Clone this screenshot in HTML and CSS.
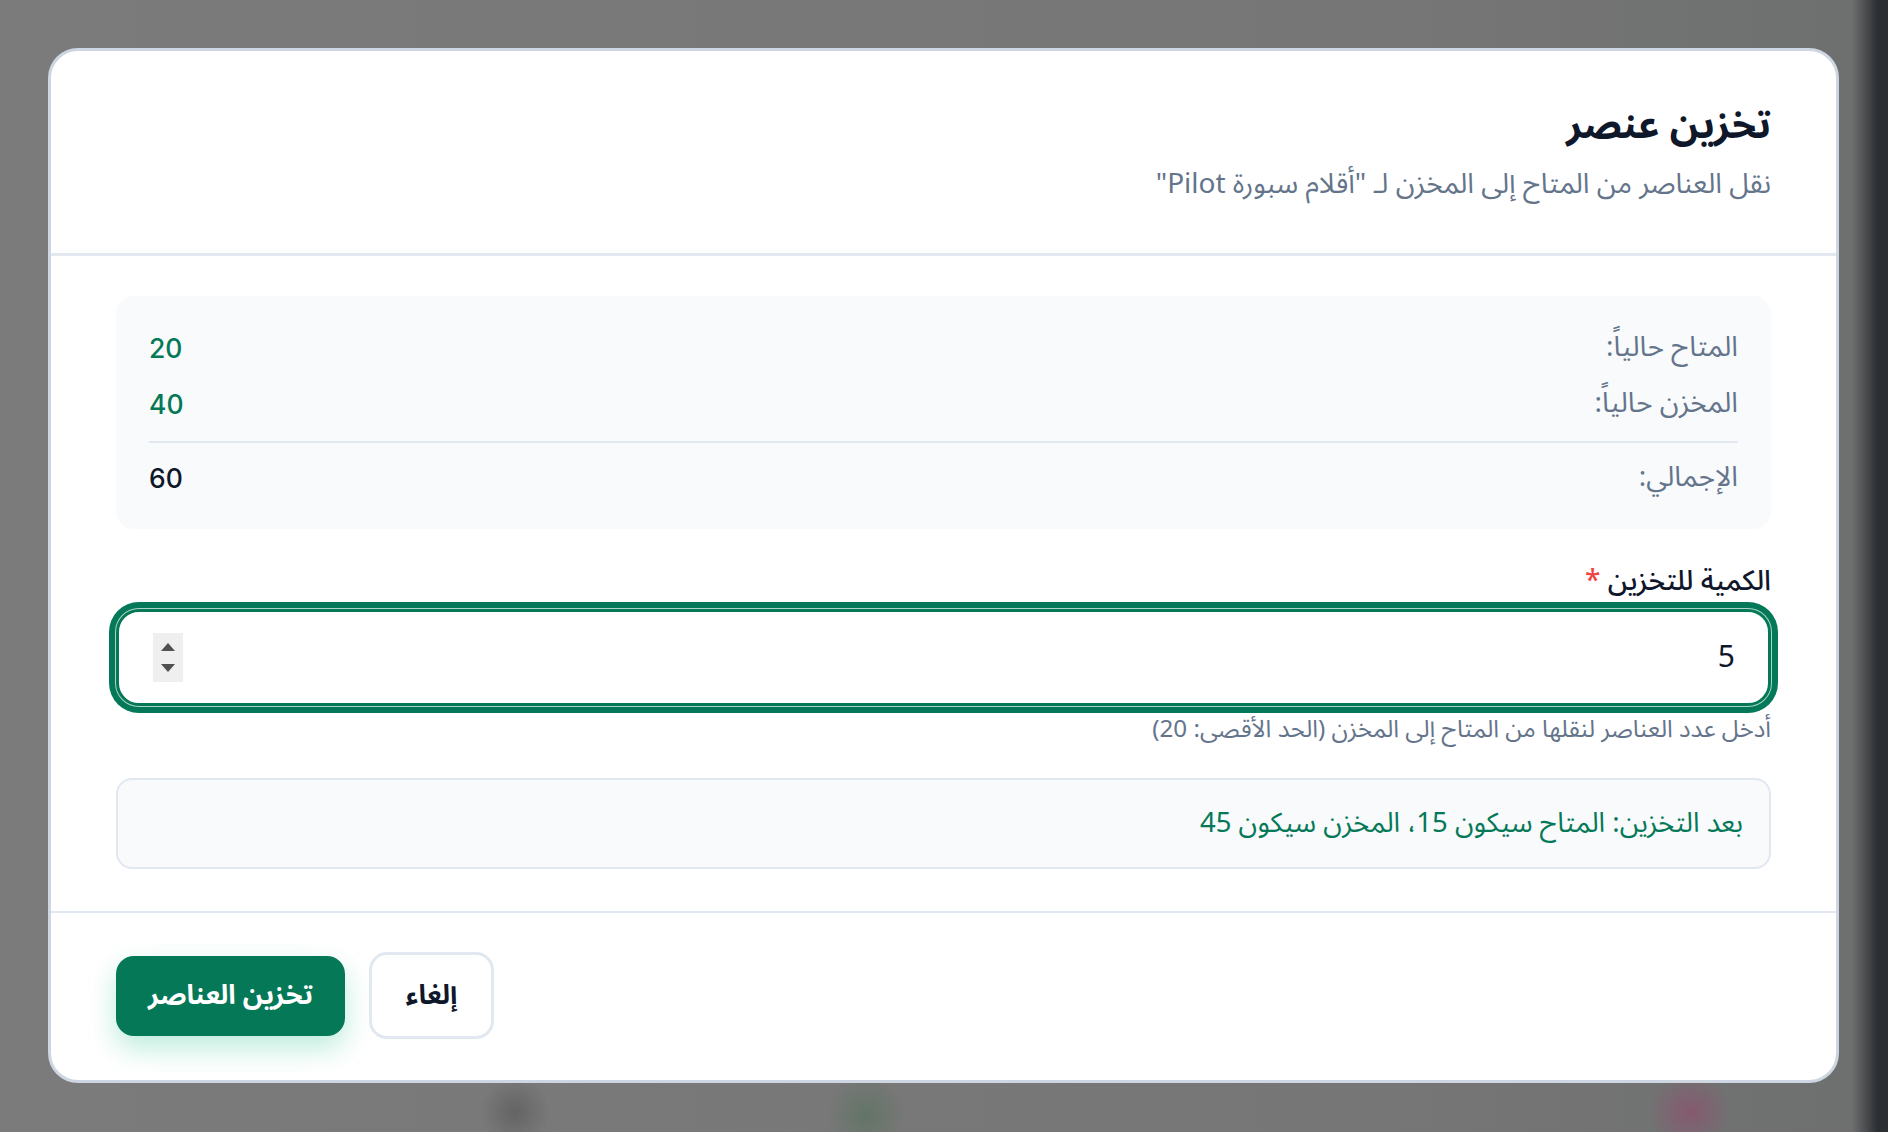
FILE: index.html
```html
<!DOCTYPE html>
<html lang="ar" dir="rtl">
<head>
<meta charset="utf-8">
<title>تخزين عنصر</title>
<link rel="stylesheet" href="styles.css">
</head>
<body>
<div class="overlay">
  <div class="modal">
    <header class="modal-header">
      <h2 class="modal-title">تخزين عنصر</h2>
      <p class="modal-subtitle">نقل العناصر من المتاح إلى المخزن لـ "أقلام سبورة Pilot"</p>
    </header>
    <section class="modal-body">
      <div class="stats">
        <div class="stat-row">
          <span class="stat-label">المتاح حالياً:</span>
          <span class="stat-value green">20</span>
        </div>
        <div class="stat-row">
          <span class="stat-label">المخزن حالياً:</span>
          <span class="stat-value green">40</span>
        </div>
        <div class="stat-row total">
          <span class="stat-label">الإجمالي:</span>
          <span class="stat-value">60</span>
        </div>
      </div>
      <label class="field-label" for="qty">الكمية للتخزين <span class="req">*</span></label>
      <div class="input-wrap">
        <input id="qty" class="qty-input" type="number" value="5" min="1" max="20">
        <span class="spinner"><span class="tri up"></span><span class="tri down"></span></span>
      </div>
      <p class="helper">أدخل عدد العناصر لنقلها من المتاح إلى المخزن (الحد الأقصى: 20)</p>
      <div class="preview">بعد التخزين: المتاح سيكون 15، المخزن سيكون 45</div>
    </section>
    <footer class="modal-footer">
      <button class="btn btn-cancel" type="button">إلغاء</button>
      <button class="btn btn-save" type="button">تخزين العناصر</button>
    </footer>
  </div>
</div>
</body>
</html>
```
FILE: styles.css
```css
* { box-sizing: border-box; }
html, body { margin: 0; padding: 0; }
body {
  width: 1888px;
  height: 1132px;
  overflow: hidden;
  font-family: "Noto Sans Arabic", "Noto Sans", "DejaVu Sans", sans-serif;
  background:
    radial-gradient(circle at 1690px 1112px, rgba(150, 70, 110, 0.55) 0, rgba(150, 70, 110, 0) 40px),
    radial-gradient(circle at 866px 1115px, rgba(60, 110, 70, 0.35) 0, rgba(60, 110, 70, 0) 40px),
    radial-gradient(circle at 515px 1112px, rgba(60, 60, 60, 0.35) 0, rgba(60, 60, 60, 0) 35px),
    linear-gradient(90deg, #7b7b7b 0, #767676 1400px, #6e6f6f 1852px, #2b2e32 1878px, #2b2e32 1888px);
}
.overlay {
  padding: 48px 0 0 48px;
  direction: ltr;
}
.modal {
  direction: rtl;
  width: 1791px;
  background: #ffffff;
  border: 3px solid #cdd6e1;
  border-radius: 30px;
  overflow: hidden;
}
.modal-header {
  padding: 47px 65px 48px;
  border-bottom: 3px solid #e2e8f0;
}
.modal-title {
  margin: 0;
  font-size: 39px;
  line-height: 56px;
  font-weight: 700;
  color: #0f172a;
}
.modal-subtitle {
  margin: 11px 0 0;
  font-size: 28px;
  line-height: 40px;
  color: #64748b;
}
.modal-body {
  padding: 40px 65px 42px;
}
.stats {
  background: #f8fafc;
  border-radius: 18px;
  padding: 34px 33px 33px;
}
.stat-row {
  display: flex;
  justify-content: space-between;
  align-items: center;
  height: 36px;
}
.stat-row + .stat-row { margin-top: 20px; }
.stat-row.total {
  margin-top: 19px;
  border-top: 2px solid #e2e8f0;
  padding-top: 17px;
  height: 55px;
}
.stat-label {
  font-size: 28px;
  line-height: 36px;
  color: #64748b;
}
.stat-value {
  font-family: Inter, "Noto Sans", sans-serif;
  font-size: 26.5px;
  line-height: 36px;
  font-weight: 500;
  color: #0f172a;
}
.stat-value.green { color: #047857; }
.field-label {
  display: block;
  margin-top: 37px;
  font-size: 28px;
  line-height: 32px;
  font-weight: 500;
  color: #0f172a;
}
.req { color: #ef4444; }
.input-wrap {
  margin-top: 11px;
  height: 97px;
  display: flex;
  align-items: center;
  border: 3px solid #047857;
  border-radius: 23px;
  box-shadow: 0 0 0 1px #a9d6c4, 0 0 0 7px #06785a;
  background: #ffffff;
  padding: 0 33px 0 34px;
}
.qty-input {
  flex: 1;
  border: 0;
  outline: none;
  background: transparent;
  font-family: "Noto Sans Arabic", "Noto Sans", sans-serif;
  font-size: 30px;
  color: #0f172a;
  text-align: right;
  padding: 0;
  -moz-appearance: textfield;
}
.qty-input::-webkit-inner-spin-button,
.qty-input::-webkit-outer-spin-button {
  -webkit-appearance: none;
  margin: 0;
}
.spinner {
  width: 30px;
  height: 49px;
  background: #efefef;
  display: flex;
  flex-direction: column;
  align-items: center;
  justify-content: center;
  gap: 13px;
  margin-right: 20px;
}
.tri {
  width: 0;
  height: 0;
  border-left: 7px solid transparent;
  border-right: 7px solid transparent;
}
.tri.up { border-bottom: 8px solid #505050; }
.tri.down { border-top: 8px solid #505050; }
.helper {
  margin: 10px 0 0;
  font-size: 24.2px;
  line-height: 28px;
  color: #64748b;
}
.preview {
  margin-top: 34px;
  border: 2px solid #e2e8f0;
  border-radius: 16px;
  background: #f8fafc;
  padding: 25px 26px 26px;
  font-size: 27.5px;
  line-height: 36px;
  color: #047857;
}
.modal-footer {
  border-top: 2px solid #e2e8f0;
  padding: 39px 65px 41px;
  display: flex;
  justify-content: flex-end;
  align-items: center;
  gap: 24px;
}
.btn {
  font-family: "Noto Sans Arabic", "Noto Sans", sans-serif;
  font-size: 27px;
  font-weight: 700;
  border-radius: 18px;
  cursor: pointer;
}
.btn-cancel {
  height: 87px;
  padding: 0 34px;
  background: #ffffff;
  border: 3.5px solid #e2e8f0;
  color: #0f172a;
}
.btn-save {
  height: 80px;
  padding: 0 32px;
  background: #047857;
  border: 0;
  color: #ffffff;
  box-shadow: 0 12px 28px rgba(16, 185, 129, 0.28);
}
```
